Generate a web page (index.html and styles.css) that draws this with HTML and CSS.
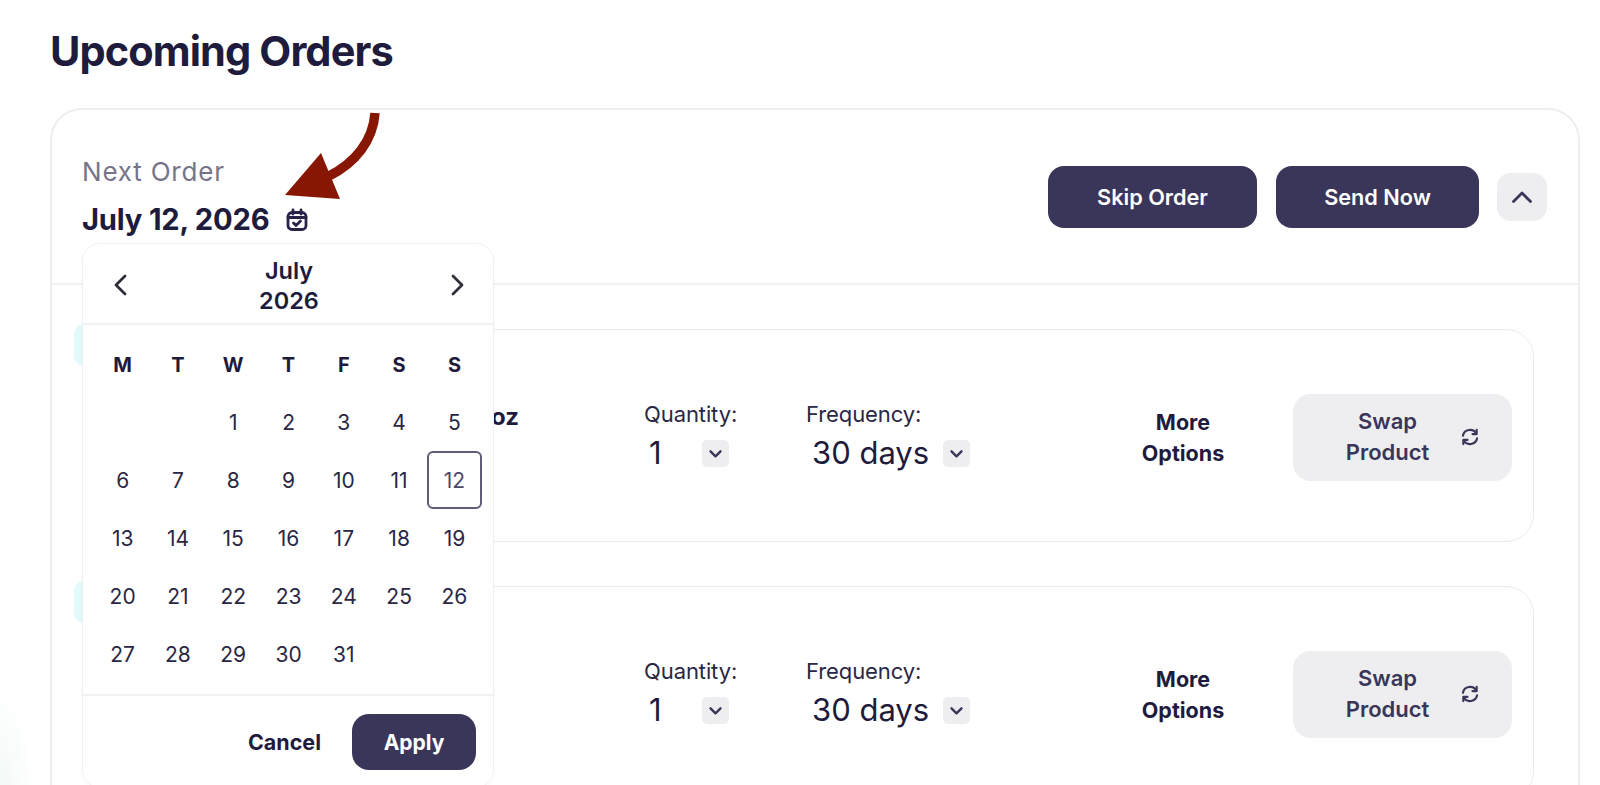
FILE: index.html
```html
<!DOCTYPE html>
<html lang="en">
<head>
<meta charset="utf-8">
<title>Upcoming Orders</title>
<link rel="stylesheet" href="styles.css">
</head>
<body>
<main class="page">
  <h1 class="title">Upcoming Orders</h1>
  <section class="orders">
    <header class="orders-head">
      <div class="next">
        <div class="next-label">Next Order</div>
        <div class="next-date">July 12, 2026
          <svg class="cal" viewBox="0 0 24 24" fill="none" stroke="currentColor" stroke-width="2.800" stroke-linecap="round" stroke-linejoin="round"><rect x="3" y="4.500" width="18" height="17" rx="4"/><path d="M8 2v4M16 2v4M3 9.500h18M8.500 15l2.500 2.500 4.500-4.500"/></svg>
        </div>
      </div>
      <div class="actions">
        <button class="btn">Skip Order</button>
        <button class="btn btn-send">Send Now</button>
        <button class="collapse"><svg viewBox="0 0 24 24" fill="none" stroke="currentColor" stroke-width="2.800" stroke-linecap="round" stroke-linejoin="round"><path d="M3.500 16.500 12 8l8.500 8.500"/></svg></button>
      </div>
    </header>
    <div class="rows">
      <article class="row">
        <span class="badge"></span>
        <div class="product">oz</div>
        <div class="field qty"><span class="field-label">Quantity:</span><span class="field-value"><span class="val val-qty">1</span><span class="drop"><svg viewBox="0 0 24 24" fill="none" stroke="currentColor" stroke-width="3.400" stroke-linecap="round" stroke-linejoin="round"><path d="m5 9 7 7 7-7"/></svg></span></span></div>
        <div class="field freq"><span class="field-label">Frequency:</span><span class="field-value"><span class="val val-freq">30 days</span><span class="drop"><svg viewBox="0 0 24 24" fill="none" stroke="currentColor" stroke-width="3.400" stroke-linecap="round" stroke-linejoin="round"><path d="m5 9 7 7 7-7"/></svg></span></span></div>
        <div class="more">More<br>Options</div>
        <button class="swap"><span class="swap-text">Swap<br>Product</span><svg viewBox="0 0 24 24" fill="none" stroke="currentColor" stroke-width="2.600" stroke-linecap="round" stroke-linejoin="round"><path d="M3.500 10.500A8.600 8.600 0 0 1 19.500 8M20 3.500V8.500h-5M20.500 13.500A8.600 8.600 0 0 1 4.500 16M4 20.500V15.500h5"/></svg></button>
      </article>
      <article class="row">
        <span class="badge"></span>
        <div class="product"></div>
        <div class="field qty"><span class="field-label">Quantity:</span><span class="field-value"><span class="val val-qty">1</span><span class="drop"><svg viewBox="0 0 24 24" fill="none" stroke="currentColor" stroke-width="3.400" stroke-linecap="round" stroke-linejoin="round"><path d="m5 9 7 7 7-7"/></svg></span></span></div>
        <div class="field freq"><span class="field-label">Frequency:</span><span class="field-value"><span class="val val-freq">30 days</span><span class="drop"><svg viewBox="0 0 24 24" fill="none" stroke="currentColor" stroke-width="3.400" stroke-linecap="round" stroke-linejoin="round"><path d="m5 9 7 7 7-7"/></svg></span></span></div>
        <div class="more">More<br>Options</div>
        <button class="swap"><span class="swap-text">Swap<br>Product</span><svg viewBox="0 0 24 24" fill="none" stroke="currentColor" stroke-width="2.600" stroke-linecap="round" stroke-linejoin="round"><path d="M3.500 10.500A8.600 8.600 0 0 1 19.500 8M20 3.500V8.500h-5M20.500 13.500A8.600 8.600 0 0 1 4.500 16M4 20.500V15.500h5"/></svg></button>
      </article>
    </div>

    <div class="picker">
      <div class="picker-head">
        <svg class="nav" viewBox="0 0 24 24" fill="none" stroke="currentColor" stroke-width="2.800" stroke-linecap="round" stroke-linejoin="round"><path d="M16 3 7 12l9 9"/></svg>
        <div class="month">July<br>2026</div>
        <svg class="nav" viewBox="0 0 24 24" fill="none" stroke="currentColor" stroke-width="2.800" stroke-linecap="round" stroke-linejoin="round"><path d="m8 3 9 9-9 9"/></svg>
      </div>
      <div class="cal-body">
        <div class="grid weekdays"><span>M</span><span>T</span><span>W</span><span>T</span><span>F</span><span>S</span><span>S</span></div>
        <div class="grid days">
          <span></span><span></span><span>1</span><span>2</span><span>3</span><span>4</span><span>5</span>
          <span>6</span><span>7</span><span>8</span><span>9</span><span>10</span><span>11</span><span class="selected">12</span>
          <span>13</span><span>14</span><span>15</span><span>16</span><span>17</span><span>18</span><span>19</span>
          <span>20</span><span>21</span><span>22</span><span>23</span><span>24</span><span>25</span><span>26</span>
          <span>27</span><span>28</span><span>29</span><span>30</span><span>31</span><span></span><span></span>
        </div>
      </div>
      <div class="picker-foot">
        <button class="cancel">Cancel</button>
        <button class="apply">Apply</button>
      </div>
    </div>

    <svg class="arrow" viewBox="0 0 100 100" fill="none">
      <path d="M92 2C90 30 72 52 46 65" stroke="#871702" stroke-width="9.500"/>
      <path d="M2 84 38 42 57 88Z" fill="#871702"/>
    </svg>
  </section>
</main>
</body>
</html>
```
FILE: styles.css
```css
* { box-sizing: border-box; }
html, body { height: 785px; margin: 0; overflow: hidden; }
body {
  font-family: "Inter", "Noto Sans", sans-serif;
  color: #1e1b3d;
  background: radial-gradient(ellipse 34px 95px at 0 100%, #f2f9f7 0%, #ffffff 100%);
}
button { font-family: inherit; border: 0; cursor: pointer; }
svg { display: block; }

.page { height: 785px; overflow: hidden; padding: 26px 20px 0 50px; }
.title {
  margin: 0 0 31px;
  font-size: 41.500px;
  line-height: 51px;
  font-weight: 700;
  letter-spacing: -0.900px;
  color: #1e1b3d;
}

.orders {
  position: relative;
  height: 760px;
  background: #fff;
  border: 2px solid #eeeef2;
  border-radius: 32px;
}
.orders-head {
  height: 175px;
  padding: 0 31px 0 30px;
  display: flex;
  align-items: center;
  justify-content: space-between;
  border-bottom: 2px solid #f1f1f4;
}
.next-label {
  font-size: 26px;
  line-height: 34px;
  color: #76748a;
  margin-bottom: 13px;
  letter-spacing: 0.800px;
}
.next-date {
  display: flex;
  align-items: center;
  gap: 16px;
  font-size: 29.200px;
  line-height: 36px;
  font-weight: 700;
  letter-spacing: -0.200px;
}
.cal { width: 24px; height: 24px; color: #272448; }

.actions { display: flex; align-items: center; }
.btn {
  width: 209px;
  height: 62px;
  padding-top: 2px;
  border-radius: 16px;
  background: #3a3659;
  color: #fff;
  font-size: 21.700px;
  font-weight: 600;
}
.btn-send { width: 203px; margin-left: 19px; }
.collapse {
  width: 50px;
  height: 48px;
  margin-left: 18px;
  padding: 0 13px;
  border-radius: 14px;
  background: #eeeef1;
  color: #3a3659;
}

.rows {
  padding: 44px 44px 0 44px;
  display: flex;
  flex-direction: column;
  gap: 44px;
}
.row {
  position: relative;
  height: 213px;
  padding: 3px 21px 0 0;
  display: flex;
  align-items: center;
  border: 1.500px solid #ebebef;
  border-radius: 28px;
  background: #fff;
}
.badge {
  position: absolute;
  left: -23px;
  top: -6px;
  width: 60px;
  height: 42px;
  border-radius: 10px;
  background: #e2fafa;
}
.product {
  width: 422px;
  margin-right: 125px;
  margin-top: -42px;
  text-align: right;
  font-size: 24px;
  font-weight: 700;
}
.field { display: flex; flex-direction: column; }
.qty { width: 162px; }
.freq { width: 301px; }
.field-label { font-size: 22px; line-height: 30px; color: #2a2745; letter-spacing: -0.100px; }
.field-value { display: flex; align-items: center; height: 44px; margin-top: 2px; }
.val { font-size: 31px; line-height: 44px; color: #1e1b3d; }
.val-qty { width: 58px; padding-left: 5px; }
.val-freq { width: 137px; padding-left: 6px; }
.drop {
  width: 27px;
  height: 27px;
  padding: 5px;
  border-radius: 5px;
  background: #eeeef1;
  color: #3a3659;
}
.more {
  width: 152px;
  margin-top: 2px;
  text-align: center;
  font-size: 21.500px;
  line-height: 31px;
  font-weight: 700;
  color: #1e1b3d;
}
.swap {
  margin-left: auto;
  width: 219px;
  height: 87px;
  display: flex;
  align-items: center;
  padding: 0 32px 0 0;
  border-radius: 18px;
  background: #eeeef1;
  color: #3a3659;
}
.swap-text { flex: 1; font-size: 22px; line-height: 31px; font-weight: 600; text-align: center; padding-left: 44px; }
.swap svg { width: 20px; height: 20px; margin-left: 22px; }

.picker {
  position: absolute;
  left: 30px;
  top: 133px;
  width: 412px;
  height: 545px;
  background: #fff;
  border: 1.500px solid #f0f0f4;
  border-radius: 18px;
  box-shadow: 0 2px 6px rgba(30, 27, 61, 0.02);
}
.picker-head {
  height: 81px;
  padding: 6px 24px 0 26px;
  display: flex;
  align-items: center;
  justify-content: space-between;
  border-bottom: 2px solid #f1f1f4;
}
.nav { width: 24px; height: 24px; margin-top: -4px; color: #2f2d3a; }
.month { text-align: center; font-size: 23.500px; line-height: 30px; font-weight: 600; margin-top: -2px; }
.cal-body { height: 371px; padding: 11px 12px 0 12px; border-bottom: 2px solid #f1f1f4; }
.grid { display: grid; grid-template-columns: repeat(7, 55.300px); }
.weekdays { height: 57px; align-items: center; text-align: center; font-size: 20px; font-weight: 700; }
.days { grid-auto-rows: 58.200px; font-size: 21px; color: #2a2745; }
.days span { display: flex; align-items: center; justify-content: center; }
.selected { border: 2px solid #5e5c78; border-radius: 6px; color: #4c4a68; }
.picker-foot {
  display: flex;
  align-items: center;
  justify-content: flex-end;
  padding: 18px 17px 0 0;
}
.cancel { background: none; font-size: 21.500px; font-weight: 700; color: #1e1b3d; padding: 0; margin-right: 31px; }
.apply {
  width: 124px;
  height: 56px;
  border-radius: 17px;
  background: #3a3659;
  color: #fff;
  font-size: 21px;
  font-weight: 700;
}
.arrow {
  position: absolute;
  left: 231px;
  top: 1px;
  width: 100px;
  height: 100px;
}
```
